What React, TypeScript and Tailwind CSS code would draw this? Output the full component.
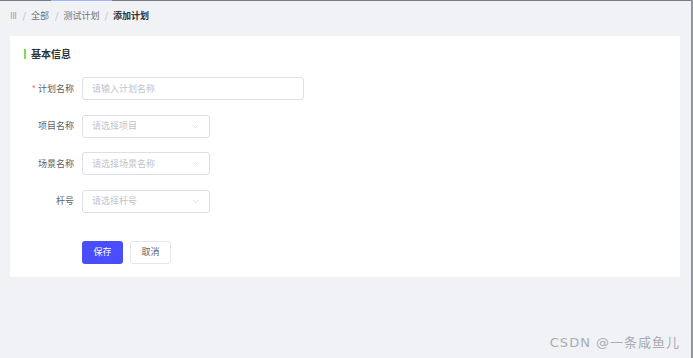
import { ChevronDown } from 'lucide-react';

const font = { fontFamily: '"Noto Sans CJK SC", "Noto Sans", sans-serif' };

type Field = { label: string; placeholder: string; required?: boolean; select?: boolean };

const fields: Field[] = [
  { label: '计划名称', placeholder: '请输入计划名称', required: true },
  { label: '项目名称', placeholder: '请选择项目', select: true },
  { label: '场景名称', placeholder: '请选择场景名称', select: true },
  { label: '杆号', placeholder: '请选择杆号', select: true },
];

export default function App() {
  return (
    <div
      className="h-[358px] w-[693px] bg-[#f0f2f5] border-r-2 border-[#8f959c] flex flex-col overflow-hidden"
      style={font}
    >
      {/* top window edge */}
      <div className="flex h-px shrink-0">
        <div className="w-[51px] bg-[#767b84]" />
        <div className="w-[61px] bg-[#a3b4ff]" />
        <div className="flex-1 bg-[#767b84]" />
      </div>

      <nav className="flex items-center h-[30px] pl-[10px] text-[9px] text-[#6b7280] gap-[5px]">
        <span className="text-[#9aa0a8] tracking-[-0.5px] mr-[1px]">III</span>
        <span className="text-[#b0b5bc]">/</span>
        <span>全部</span>
        <span className="text-[#b0b5bc] ml-[1px]">/</span>
        <span>测试计划</span>
        <span className="text-[#b0b5bc]">/</span>
        <span className="font-bold text-[#303133]">添加计划</span>
      </nav>

      <div className="mx-[10px] mt-[5px] bg-white h-[241px] w-[670px] pt-[13px]">
        <div className="flex items-center ml-[14px] gap-[5px]">
          <span className="w-[2px] h-[10px] bg-[#7ed957]" />
          <span className="text-[10px] font-bold text-[#303133] leading-none">基本信息</span>
        </div>

        <div className="mt-[18px] flex flex-col gap-[14.5px]">
          {fields.map((f) => (
            <div key={f.label} className="flex items-center">
              <label className="w-[72px] shrink-0 pr-[8px] text-right text-[9px] text-[#606266]">
                {f.required && <span className="text-[#f56c6c] mr-[2px]">*</span>}
                {f.label}
              </label>
              <div
                className={`h-[23px] border border-[#dcdfe6] rounded-[3px] flex items-center justify-between pl-[9px] pr-[9px] text-[9px] text-[#c0c4cc] ${f.select ? 'w-[128px]' : 'w-[222px]'}`}
              >
                <span>{f.placeholder}</span>
                {f.select && <ChevronDown className="w-[9px] h-[9px] text-[#c0c4cc]" strokeWidth={1.5} />}
              </div>
            </div>
          ))}
        </div>

        <div className="flex gap-[7px] ml-[72px] mt-[28px]">
          <button className="w-[41px] h-[23px] rounded-[3px] bg-[#4a4dfb] text-white text-[9px]">保存</button>
          <button className="w-[41px] h-[23px] rounded-[3px] border border-[#e4e7ed] bg-white text-[#606266] text-[9px]">取消</button>
        </div>
      </div>

      <div
        className="mt-auto mb-[6px] self-end mr-[11px] text-[13px] tracking-[1px] text-[#a9adb3]"
        style={{ fontFamily: '"DejaVu Sans", "Noto Sans CJK SC", sans-serif' }}
      >
        CSDN @一条咸鱼儿
      </div>
    </div>
  );
}
